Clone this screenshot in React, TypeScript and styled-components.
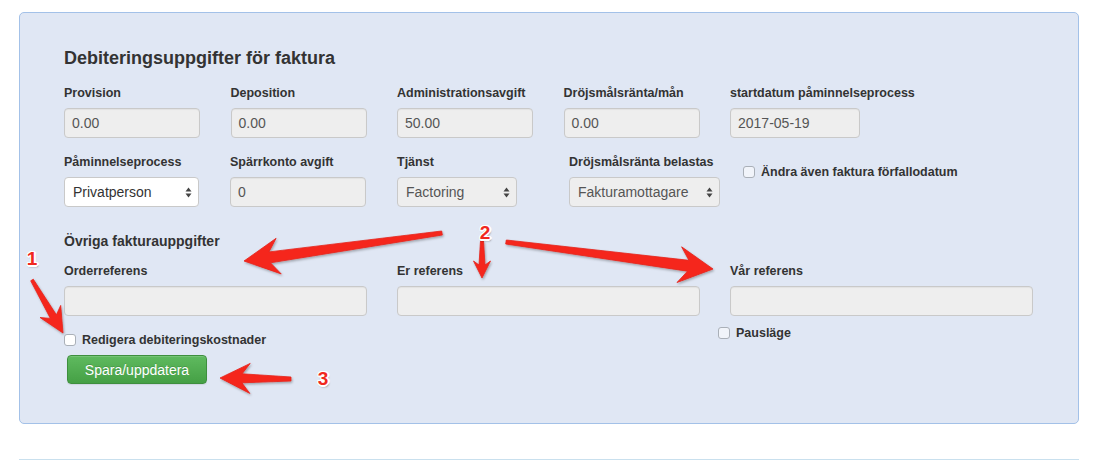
import React from "react";
import styled, { createGlobalStyle } from "styled-components";

const Global = createGlobalStyle`
  html, body { margin: 0; padding: 0; background: #fff; }
  body { font-family: "Liberation Sans", Arial, Helvetica, sans-serif; color: #333; }
`;

const Page = styled.div`
  position: relative;
  width: 1118px;
  height: 461px;
  box-sizing: border-box;
  padding: 12px 39px 0 19px;
  overflow: hidden;
`;

const Panel = styled.section`
  height: 412px;
  box-sizing: border-box;
  border: 1px solid #a3c1e8;
  border-radius: 5px;
  background: #e0e7f4;
  padding: 35px 0 0 44px;
`;

const Heading = styled.h2`
  margin: 0 0 17px;
  font-size: 18px;
  line-height: 20px;
  font-weight: bold;
  color: #333;
`;

const SubHeading = styled.h3`
  margin: 26px 0 14px;
  font-size: 14px;
  line-height: 16px;
  font-weight: bold;
  color: #333;
`;

const Grid = styled.div<{ $cols: string; $mt?: number }>`
  display: grid;
  grid-template-columns: ${(p) => p.$cols};
  margin-top: ${(p) => p.$mt ?? 0}px;
`;

const Row = styled.div<{ $mt?: number }>`
  display: flex;
  align-items: flex-start;
  margin-top: ${(p) => p.$mt ?? 0}px;
`;

const Field = styled.div<{ $w?: number }>`
  display: flex;
  flex-direction: column;
  ${(p) => (p.$w ? `width: ${p.$w}px; flex: none;` : "")}
`;

const Label = styled.label`
  display: block;
  font-size: 12.5px;
  line-height: 16px;
  font-weight: bold;
  color: #333;
  margin-bottom: 7px;
  white-space: nowrap;
`;

const Input = styled.div<{ $w: number }>`
  width: ${(p) => p.$w}px;
  height: 30px;
  box-sizing: border-box;
  border: 1px solid #c9c9c9;
  border-radius: 4px;
  background: #eeeeee;
  box-shadow: inset 0 1px 1px rgba(0, 0, 0, 0.05);
  padding: 0 7px;
  display: flex;
  align-items: center;
  font-size: 14px;
  color: #555;
`;

const Select = styled.div<{ $w: number; $disabled?: boolean }>`
  width: ${(p) => p.$w}px;
  height: 30px;
  box-sizing: border-box;
  border: 1px solid #c9c9c9;
  border-radius: 4px;
  background: ${(p) => (p.$disabled ? "#eeeeee" : "#ffffff")};
  padding: 0 6px 0 8px;
  display: flex;
  align-items: center;
  justify-content: space-between;
  font-size: 14px;
  color: ${(p) => (p.$disabled ? "#555" : "#333")};
`;

const CheckRow = styled.label<{ $mt: number; $ml?: number }>`
  display: flex;
  align-items: center;
  gap: 6px;
  height: 12px;
  margin-top: ${(p) => p.$mt}px;
  margin-left: ${(p) => p.$ml ?? 0}px;
  font-size: 12.5px;
  font-weight: bold;
  color: #333;
  white-space: nowrap;
`;

const Box = styled.span<{ $tint?: boolean }>`
  width: 12px;
  height: 12px;
  box-sizing: border-box;
  flex: none;
  border: 1px solid #aab0b8;
  border-radius: 3px;
  background: ${(p) => (p.$tint ? "#f1f4fa" : "#ffffff")};
`;

const Button = styled.button`
  margin: 9px 0 0 3px;
  width: 140px;
  height: 29px;
  box-sizing: border-box;
  border: 1px solid #3e8f3e;
  border-radius: 4px;
  background: linear-gradient(#5fba5f, #45a045);
  color: #fff;
  font-family: "Liberation Sans", Arial, sans-serif;
  font-size: 14px;
  text-shadow: 0 -1px 0 rgba(0, 0, 0, 0.15);
  box-shadow: inset 0 1px 0 rgba(255, 255, 255, 0.15), 0 1px 1px rgba(0, 0, 0, 0.08);
  padding: 0;
  align-self: flex-start;
`;

const Divider = styled.div`
  margin-top: 35px;
  height: 1px;
  background: #c9e0ee;
`;

const Overlay = styled.div`
  position: absolute;
  inset: 0;
  pointer-events: none;
`;

const Num = styled.span<{ $x: number; $y: number }>`
  position: absolute;
  left: ${(p) => p.$x}px;
  top: ${(p) => p.$y}px;
  transform: translate(-50%, -50%);
  font-family: "Liberation Sans", Arial, sans-serif;
  font-size: 19px;
  font-weight: bold;
  line-height: 1;
  color: #f0281e;
  text-shadow: 1px 0 #fff, -1px 0 #fff, 0 1px #fff, 0 -1px #fff, 1px 1px #fff,
    -1px -1px #fff, 1px -1px #fff, -1px 1px #fff, 2px 0 #fff, 0 2px #fff,
    1px 2px 2px rgba(0, 0, 0, 0.45);
`;

const Chevrons = () => (
  <svg width="7" height="11" viewBox="0 0 7 11" aria-hidden>
    <path d="M3.5 0.5 L6.5 4.5 H0.5 Z" fill="#444" />
    <path d="M3.5 10.5 L6.5 6.5 H0.5 Z" fill="#444" />
  </svg>
);

type Pt = [number, number];
type ArrowDef = { t: Pt; p: Pt; hl: number; hh: number; w0: number; w1: number; notch: number };

function arrowPoints(a: ArrowDef): string {
  const [tx, ty] = a.t;
  const [px, py] = a.p;
  const len = Math.hypot(px - tx, py - ty);
  const dx = (px - tx) / len;
  const dy = (py - ty) / len;
  const nx = -dy;
  const ny = dx;
  const bx = px - dx * a.hl;
  const by = py - dy * a.hl;
  const cx = px - dx * (a.hl - a.notch);
  const cy = py - dy * (a.hl - a.notch);
  const pts: Pt[] = [
    [tx + (nx * a.w0) / 2, ty + (ny * a.w0) / 2],
    [cx + (nx * a.w1) / 2, cy + (ny * a.w1) / 2],
    [bx + nx * a.hh, by + ny * a.hh],
    [px, py],
    [bx - nx * a.hh, by - ny * a.hh],
    [cx - (nx * a.w1) / 2, cy - (ny * a.w1) / 2],
    [tx - (nx * a.w0) / 2, ty - (ny * a.w0) / 2],
  ];
  return pts.map(([x, y]) => `${x.toFixed(1)},${y.toFixed(1)}`).join(" ");
}

const arrows: ArrowDef[] = [
  { t: [32, 280], p: [63, 333], hl: 25, hh: 12, w0: 3, w1: 7, notch: 6 },
  { t: [442, 233], p: [244, 261], hl: 35, hh: 18, w0: 4, w1: 11, notch: 9 },
  { t: [482, 241], p: [482, 278], hl: 17, hh: 8.5, w0: 3, w1: 6, notch: 4 },
  { t: [506, 242], p: [713, 269], hl: 34, hh: 18, w0: 4, w1: 11, notch: 9 },
  { t: [291, 379], p: [220, 378], hl: 30, hh: 15, w0: 4, w1: 9, notch: 8 },
];

const topFields = [
  { label: "Provision", value: "0.00", w: 136 },
  { label: "Deposition", value: "0.00", w: 136 },
  { label: "Administrationsavgift", value: "50.00", w: 136 },
  { label: "Dröjsmålsränta/mån", value: "0.00", w: 136 },
  { label: "startdatum påminnelseprocess", value: "2017-05-19", w: 130 },
];

export default function App() {
  return (
    <>
      <Global />
      <Page>
        <Panel>
          <Heading>Debiteringsuppgifter för faktura</Heading>
          <Grid $cols="repeat(5, 166.5px)">
            {topFields.map((f) => (
              <Field key={f.label}>
                <Label>{f.label}</Label>
                <Input $w={f.w}>{f.value}</Input>
              </Field>
            ))}
          </Grid>
          <Row $mt={16}>
            <Field $w={166}>
              <Label>Påminnelseprocess</Label>
              <Select $w={135}>
                <span>Privatperson</span>
                <Chevrons />
              </Select>
            </Field>
            <Field $w={167}>
              <Label>Spärrkonto avgift</Label>
              <Input $w={136}>0</Input>
            </Field>
            <Field $w={172}>
              <Label>Tjänst</Label>
              <Select $w={120} $disabled>
                <span>Factoring</span>
                <Chevrons />
              </Select>
            </Field>
            <Field $w={174}>
              <Label>Dröjsmålsränta belastas</Label>
              <Select $w={151} $disabled>
                <span>Fakturamottagare</span>
                <Chevrons />
              </Select>
            </Field>
            <CheckRow $mt={12}>
              <Box $tint />
              Ändra även faktura förfallodatum
            </CheckRow>
          </Row>

          <SubHeading>Övriga fakturauppgifter</SubHeading>
          <Grid $cols="repeat(3, 333px)">
            <Field>
              <Label>Orderreferens</Label>
              <Input $w={303} />
              <CheckRow $mt={18}>
                <Box />
                Redigera debiteringskostnader
              </CheckRow>
              <Button type="button">Spara/uppdatera</Button>
            </Field>
            <Field>
              <Label>Er referens</Label>
              <Input $w={303} />
            </Field>
            <Field>
              <Label>Vår referens</Label>
              <Input $w={303} />
              <CheckRow $mt={11} $ml={-12}>
                <Box $tint />
                Pausläge
              </CheckRow>
            </Field>
          </Grid>
        </Panel>
        <Divider />

        <Overlay>
          <svg width="1118" height="461" viewBox="0 0 1118 461" style={{ position: "absolute", left: 0, top: 0 }}>
            <defs>
              <filter id="sh" x="-20%" y="-20%" width="140%" height="140%">
                <feDropShadow dx="1" dy="1.5" stdDeviation="1.2" floodColor="#000" floodOpacity="0.3" />
              </filter>
            </defs>
            {arrows.map((a, i) => (
              <polygon
                key={i}
                points={arrowPoints(a)}
                fill="#f5281f"
                stroke="#e4221a"
                strokeWidth="0.8"
                strokeLinejoin="round"
                filter="url(#sh)"
              />
            ))}
          </svg>
          <Num $x={32} $y={258}>1</Num>
          <Num $x={485} $y={232}>2</Num>
          <Num $x={323} $y={378}>3</Num>
        </Overlay>
      </Page>
    </>
  );
}
